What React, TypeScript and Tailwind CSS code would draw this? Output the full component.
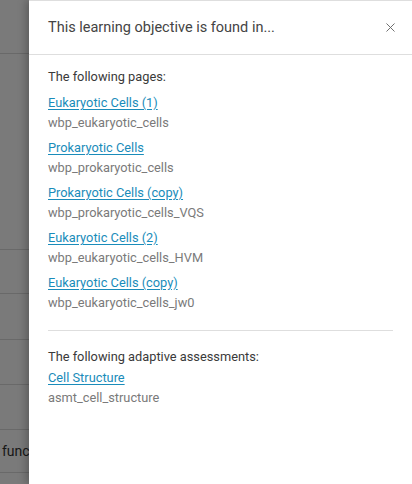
import { X } from "lucide-react";

const pages = [
  { title: "Eukaryotic Cells (1)", id: "wbp_eukaryotic_cells" },
  { title: "Prokaryotic Cells", id: "wbp_prokaryotic_cells" },
  { title: "Prokaryotic Cells (copy)", id: "wbp_prokaryotic_cells_VQS" },
  { title: "Eukaryotic Cells (2)", id: "wbp_eukaryotic_cells_HVM" },
  { title: "Eukaryotic Cells (copy)", id: "wbp_eukaryotic_cells_jw0" },
];

const assessments = [{ title: "Cell Structure", id: "asmt_cell_structure" }];

const rowHeights = [54, 196, 44, 46, 45, 45, 43];

const Item = ({ title, id }: { title: string; id: string }) => (
  <div className="mb-[5px]">
    <a href="#" className="block text-[12.8px] leading-[20px] text-[#1a8cba] underline underline-offset-2">
      {title}
    </a>
    <div className="text-[12.8px] leading-[20px] text-[#7a7a7a]">{id}</div>
  </div>
);

export default function App() {
  return (
    <div className="relative w-[412px] h-[484px] overflow-hidden bg-white font-['Roboto',sans-serif]">
      {/* page underneath */}
      <div className="flex flex-col">
        {rowHeights.map((h, i) => (
          <div key={i} style={{ height: h }} className="border-b border-[#dcdcdc] flex items-center pl-[2px] text-[14px] text-[#333]">
            {i === 6 ? "function" : ""}
          </div>
        ))}
      </div>
      <div className="absolute inset-0 bg-black/[0.52]" />

      {/* drawer */}
      <div className="absolute top-0 bottom-0 right-0 left-[29px] bg-white border-t border-[#dedede] shadow-[-3px_0_8px_rgba(0,0,0,0.25)] flex flex-col">
        <div className="h-[54px] shrink-0 border-b border-[#dedede] flex items-center justify-between pl-[19px] pr-[14px]">
          <h2 className="text-[14.5px] text-[#444]">This learning objective is found in...</h2>
          <button className="text-[#666]">
            <X size={15} strokeWidth={1.5} />
          </button>
        </div>
        <div className="px-[19px] pt-[12px]">
          <p className="text-[12.8px] leading-[20px] text-[#3a3a3a] mb-[6px]">The following pages:</p>
          {pages.map((p) => (
            <Item key={p.id} {...p} />
          ))}
          <div className="mt-[17px] mb-[16px] border-t border-[#dedede]" />
          <p className="text-[12.8px] leading-[20px] text-[#3a3a3a] mb-[1px]">The following adaptive assessments:</p>
          {assessments.map((p) => (
            <Item key={p.id} {...p} />
          ))}
        </div>
      </div>
    </div>
  );
}
